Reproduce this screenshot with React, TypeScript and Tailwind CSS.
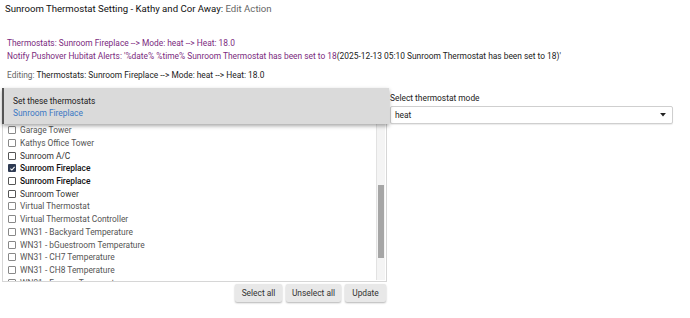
import React from "react";

type Item = { label: string; checked?: boolean; bold?: boolean; dark?: boolean };

const items: Item[] = [
  { label: "Garage Tower" },
  { label: "Kathys Office Tower" },
  { label: "Sunroom A/C", dark: true },
  { label: "Sunroom Fireplace", checked: true, bold: true, dark: true },
  { label: "Sunroom Fireplace", bold: true, dark: true },
  { label: "Sunroom Tower", dark: true },
  { label: "Virtual Thermostat" },
  { label: "Virtual Thermostat Controller" },
  { label: "WN31 - Backyard Temperature" },
  { label: "WN31 - bGuestroom Temperature" },
  { label: "WN31 - CH7 Temperature" },
  { label: "WN31 - CH8 Temperature" },
  { label: "WN31 - Freezer Temperature" },
];

function Box({ checked, dark }: { checked?: boolean; dark?: boolean }) {
  if (checked) {
    return (
      <span className="flex h-[8px] w-[8px] shrink-0 items-center justify-center rounded-[1px] bg-[#2e3a52]">
        <svg viewBox="0 0 10 10" className="h-[7px] w-[7px]">
          <path d="M2 5.2 L4.1 7.2 L8 2.8" fill="none" stroke="#fff" strokeWidth="1.6" />
        </svg>
      </span>
    );
  }
  return (
    <span
      className={`h-[8px] w-[8px] shrink-0 rounded-[1px] border bg-white ${
        dark ? "border-[#555]" : "border-[#888]"
      }`}
    />
  );
}

export default function App() {
  return (
    <div
      className="relative h-[318px] w-[690px] overflow-hidden bg-white text-[#222]"
      style={{ fontFamily: "Roboto, 'Liberation Sans', sans-serif" }}
    >
      <div className="px-[5px] pt-[3px] text-[9.6px] leading-[12px]">
        <span className="text-[#111]">Sunroom Thermostat Setting - Kathy and Cor Away:</span>
        <span className="text-[#666]"> Edit Action</span>
      </div>

      <div className="mt-[22px] px-[7px] text-[8.4px] leading-[13px] text-[#7b2a7e]">
        <div>Thermostats: Sunroom Fireplace --&gt; Mode: heat --&gt; Heat: 18.0</div>
        <div>
          Notify Pushover Hubitat Alerts: '%date% %time% Sunroom Thermostat has been set to 18
          <span className="text-[#222]">(2025-12-13 05:10 Sunroom Thermostat has been set to 18)'</span>
        </div>
      </div>

      <div className="mt-[7px] px-[7px] text-[8.4px] leading-[11px] text-[#666]">
        Editing: <span className="text-[#222]">Thermostats: Sunroom Fireplace --&gt; Mode: heat --&gt; Heat: 18.0</span>
      </div>

      <div className="mt-[7px] flex gap-[3px] pl-[2px]">
        <div className="flex w-[385px] flex-col">
          <div className="relative h-[194px] w-[385px] border border-[#d6d6d6] bg-white">
            <div className="h-full overflow-hidden">
              <div className="flex flex-col pt-[35px]">
                {items.map((it, i) => (
                  <div key={i} className="flex h-[12.7px] items-center gap-[4px] pl-[5px]">
                    <Box checked={it.checked} dark={it.dark} />
                    <span
                      className={`text-[8.4px] leading-[10px] ${
                        it.bold ? "font-medium text-[#111]" : it.dark ? "text-[#333]" : "text-[#555]"
                      }`}
                    >
                      {it.label}
                    </span>
                  </div>
                ))}
              </div>
            </div>
            {/* scrollbar */}
            <div className="absolute right-[1px] top-[30px] bottom-[1px] w-[9px] border-l border-[#e2e2e2] bg-[#f4f4f4]">
              <div className="absolute left-[1px] right-[1px] top-[66px] h-[73px] bg-[#a6a6a6]" />
            </div>
            {/* overlay header */}
            <div className="absolute left-[-1px] top-[-1px] h-[36px] w-[387px] border-l-2 border-[#555] bg-[#dadada] pl-[9px] pt-[8px] shadow-[0_2px_4px_rgba(0,0,0,0.35)]">
              <div className="text-[8.4px] leading-[11.5px] text-[#222]">Set these thermostats</div>
              <div className="text-[8.4px] leading-[11.5px] text-[#3b78c4]">Sunroom Fireplace</div>
            </div>
          </div>
          <div className="mt-[2px] flex justify-end gap-[4px] pr-[1px]">
            <button className="h-[18px] w-[47px] rounded-[2px] bg-[#e8e8e8] text-[8.4px] text-[#333] shadow-[0_1px_2px_rgba(0,0,0,0.3)]">
              Select all
            </button>
            <button className="h-[18px] w-[55px] rounded-[2px] bg-[#e8e8e8] text-[8.4px] text-[#333] shadow-[0_1px_2px_rgba(0,0,0,0.3)]">
              Unselect all
            </button>
            <button className="h-[18px] w-[41px] rounded-[2px] bg-[#e8e8e8] text-[8.4px] text-[#333] shadow-[0_1px_2px_rgba(0,0,0,0.3)]">
              Update
            </button>
          </div>
        </div>

        <div className="flex w-[283px] flex-col pt-[5px]">
          <div className="text-[8.4px] leading-[11px] text-[#222]">Select thermostat mode</div>
          <div className="mt-[2px] flex h-[18px] items-center justify-between rounded-[2px] border border-[#cfcfcf] bg-white pl-[4px] pr-[6px] shadow-[0_1px_1px_rgba(0,0,0,0.08)]">
            <span className="text-[8.4px] text-[#222]">heat</span>
            <svg viewBox="0 0 10 6" className="h-[3.5px] w-[6px]">
              <path d="M0 0 L10 0 L5 6 Z" fill="#222" />
            </svg>
          </div>
        </div>
      </div>
    </div>
  );
}
